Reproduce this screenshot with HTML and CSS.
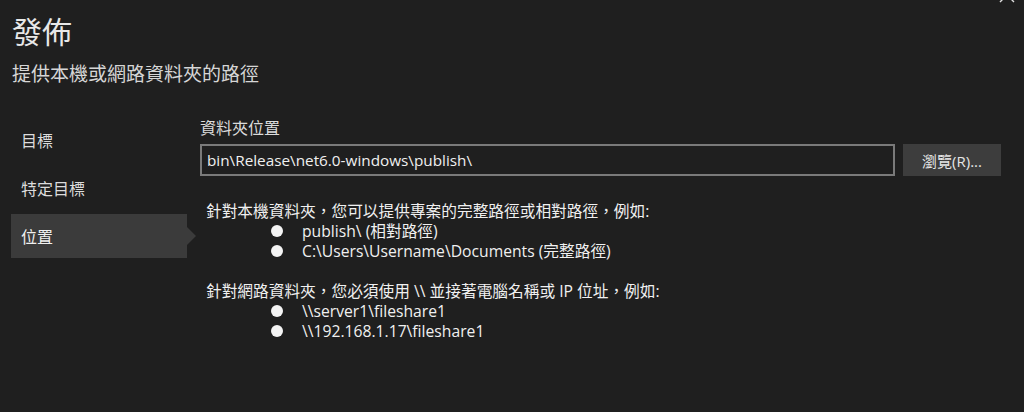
FILE: index.html
```html
<!DOCTYPE html>
<html lang="zh-Hant">
<head>
<meta charset="utf-8">
<title>發佈</title>
<link rel="stylesheet" href="styles.css">
</head>
<body>
<svg class="close" width="16" height="16" viewBox="0 0 16 16"><path d="M1 1 L15 15 M15 1 L1 15" stroke="#e0e0e0" stroke-width="1.4" fill="none"/></svg>
<header class="header">
  <h1 class="title">發佈</h1>
  <p class="subtitle">提供本機或網路資料夾的路徑</p>
</header>
<div class="main">
  <nav class="nav">
    <div class="nav-item">目標</div>
    <div class="nav-item">特定目標</div>
    <div class="nav-item active">位置</div>
  </nav>
  <section class="content">
    <div class="label">資料夾位置</div>
    <div class="row">
      <div class="input">bin\Release\net6.0-windows\publish\</div>
      <button class="btn">瀏覽(R)...</button>
    </div>
    <div class="help">
      <p class="help-line">針對本機資料夾，您可以提供專案的完整路徑或相對路徑，例如:</p>
      <ul class="list">
        <li class="item">publish\ (相對路徑)</li>
        <li class="item">C:\Users\Username\Documents (完整路徑)</li>
      </ul>
      <p class="help-line gap">針對網路資料夾，您必須使用 \\ 並接著電腦名稱或 IP 位址，例如:</p>
      <ul class="list">
        <li class="item">\\server1\fileshare1</li>
        <li class="item">\\192.168.1.17\fileshare1</li>
      </ul>
    </div>
  </section>
</div>
</body>
</html>
```

FILE: styles.css
```css
* { box-sizing: border-box; }
html, body { margin: 0; padding: 0; }
body {
  background: #1f1f1f;
  color: #f0f0f0;
  font-family: "Open Sans", "Noto Sans CJK TC", sans-serif;
  width: 1024px;
  height: 412px;
  overflow: hidden;
  position: relative;
}
.close {
  position: absolute;
  left: 999px;
  top: -13px;
}
.header {
  padding: 10px 0 0 12px;
}
.title {
  margin: 0;
  font-family: "Noto Sans CJK TC", sans-serif;
  font-weight: 400;
  font-size: 30px;
  line-height: 40px;
  color: #e8e8e8;
}
.subtitle {
  margin: 10px 0 0;
  font-family: "Noto Sans CJK TC", sans-serif;
  font-size: 19px;
  line-height: 26px;
  color: #d6d6d6;
}
.main {
  display: flex;
  margin-top: 31px;
}
.nav {
  width: 176px;
  margin-left: 11px;
  margin-right: 13px;
  padding-top: 1px;
  display: flex;
  flex-direction: column;
  gap: 4px;
}
.nav-item {
  height: 44px;
  display: flex;
  align-items: center;
  padding-left: 10px;
  font-family: "Noto Sans CJK TC", sans-serif;
  font-size: 16px;
  color: #dcdcdc;
  position: relative;
}
.nav-item.active {
  background: #3b3b3b;
  color: #f0f0f0;
}
.nav-item.active::after {
  content: "";
  position: absolute;
  right: -9px;
  top: 13px;
  border-left: 9px solid #3b3b3b;
  border-top: 9px solid transparent;
  border-bottom: 9px solid transparent;
}
.content {
  flex: 1;
  padding-right: 23px;
}
.label {
  font-family: "Noto Sans CJK TC", sans-serif;
  font-size: 16px;
  line-height: 20px;
  color: #dcdcdc;
}
.row {
  display: flex;
  gap: 8px;
  margin-top: 7px;
}
.input {
  width: 695px;
  height: 32px;
  border: 2px solid #7a7a7a;
  padding-left: 5px;
  display: flex;
  align-items: center;
  font-size: 15.3px;
  color: #f0f0f0;
}
.btn {
  width: 98px;
  height: 32px;
  border: none;
  background: #3d3d3d;
  color: #e6e6e6;
  font-family: "Open Sans", "Noto Sans CJK TC", sans-serif;
  font-size: 15px;
  padding: 0;
}
.help {
  margin-top: 25px;
  padding-left: 6px;
  font-size: 15.7px;
  line-height: 20px;
}
.help-line { margin: 0; }
.help-line.gap { margin-top: 20px; }
.list {
  list-style: none;
  margin: 0;
  padding: 0 0 0 96px;
}
.item { position: relative; }
.item::before {
  content: "";
  position: absolute;
  left: -31px;
  top: 4px;
  width: 12px;
  height: 12px;
  border-radius: 50%;
  background: #f4f4f4;
}
```
